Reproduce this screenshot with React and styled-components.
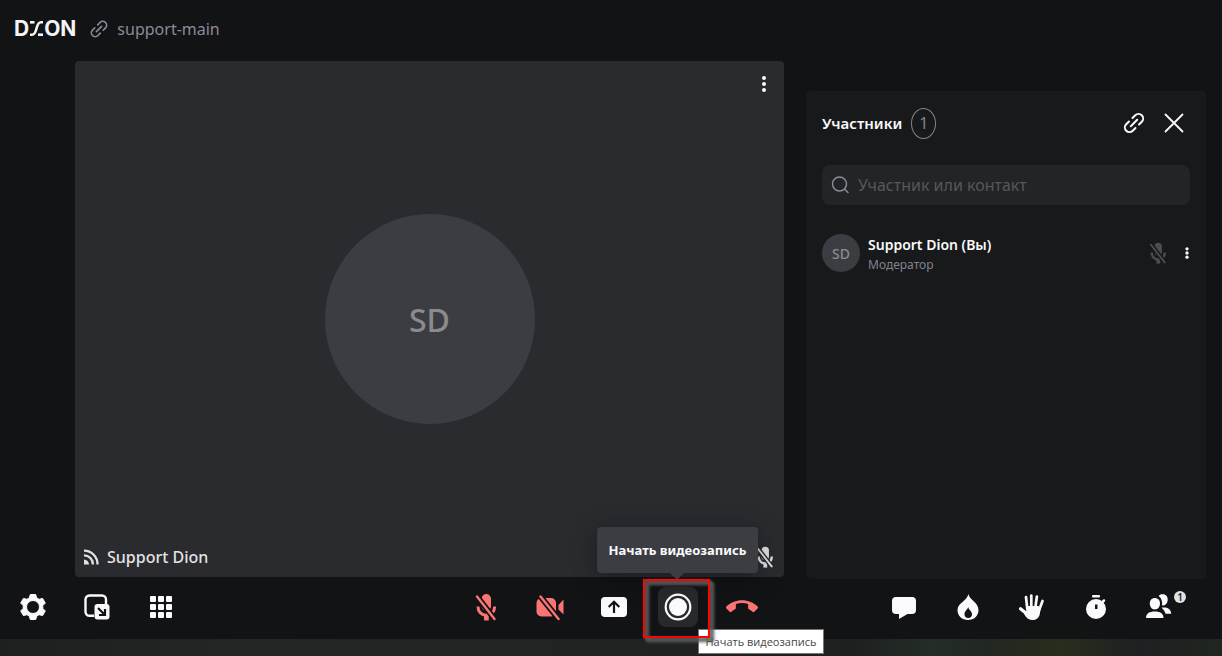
import React, { useId } from "react";
import styled, { createGlobalStyle } from "styled-components";
import { MdCallEnd } from "react-icons/md";

const GlobalStyle = createGlobalStyle`
  *, *::before, *::after { box-sizing: border-box; }
  body {
    margin: 0;
    background: #121315;
    color: #fafafc;
    font-family: "Noto Sans", "Open Sans", sans-serif;
  }
  button, input { font: inherit; color: inherit; }
`;

const Page = styled.div`
  display: flex;
  flex-direction: column;
  min-height: 100vh;
`;

const Header = styled.header`
  display: flex;
  align-items: center;
  height: 57px;
  padding: 0 14px;
`;

const Logo = styled.a`
  display: flex;
  align-items: center;
  gap: 1px;
  color: #f4f4f6;
  font: 700 21px/20px Inter, sans-serif;
  text-decoration: none;
`;

const RoomLink = styled.a`
  display: flex;
  align-items: center;
  gap: 8px;
  margin-left: 13px;
  color: #8b8b99;
  font-size: 16px;
  line-height: 24px;
  text-decoration: none;
`;

const Main = styled.main`
  display: flex;
  flex: 1;
  gap: 22px;
  padding: 4px 16px 8px 75px;
`;

const Stage = styled.section`
  display: grid;
  grid-template-rows: 46px 1fr 46px;
  flex: 1;
  margin-bottom: 2px;
  border-radius: 4px;
  background: #2a2b2f;
`;

const StageTop = styled.div`
  display: flex;
  align-items: center;
  justify-content: flex-end;
  padding: 0 8px;
`;

const StageBottom = styled.div`
  display: flex;
  align-items: center;
  justify-content: space-between;
  padding: 6px 8px 0;
  color: #e2e2e4;
`;

const Speaker = styled.span`
  display: flex;
  align-items: center;
  gap: 8px;
  font-size: 16px;
  font-weight: 500;
  line-height: 24px;
`;

const Avatar = styled.div`
  display: flex;
  align-items: center;
  justify-content: center;
  flex: none;
  place-self: center;
  width: ${(p) => p.$size}px;
  height: ${(p) => p.$size}px;
  border-radius: 50%;
  background: #3c3d42;
  color: #8a8b8f;
  font-size: ${(p) => p.$font}px;
  font-weight: 500;
`;

const Panel = styled.aside`
  flex: none;
  width: 400px;
  margin-top: 30px;
  padding: 16px;
  border-radius: 4px;
  background: #18191b;
`;

const PanelHead = styled.div`
  display: flex;
  align-items: center;
  height: 32px;
`;

const PanelTitle = styled.h2`
  margin: 0;
  font-size: 15px;
  font-weight: 600;
  line-height: 24px;
`;

const Count = styled.span`
  display: flex;
  align-items: center;
  justify-content: center;
  width: 25px;
  height: 31px;
  margin: 0 auto 0 9px;
  border: 1px solid #83838f;
  border-radius: 50%;
  color: #83838f;
  font-size: 16px;
`;

const IconButton = styled.button`
  display: flex;
  align-items: center;
  justify-content: center;
  width: ${(p) => p.$width || 32}px;
  height: 32px;
  padding: 0;
  border: 0;
  background: none;
  color: #fafafc;
`;

const PanelActions = styled.div`
  display: flex;
  gap: 8px;
`;

const Search = styled.label`
  display: flex;
  align-items: center;
  gap: 8px;
  height: 40px;
  margin-top: 26px;
  padding: 0 8px;
  border-radius: 8px;
  background: #232426;
  color: #8b8b95;
`;

const SearchInput = styled.input`
  flex: 1;
  min-width: 0;
  padding: 0;
  border: 0;
  outline: 0;
  background: none;
  font-size: 16px;
  &::placeholder { color: #56575e; opacity: 1; }
`;

const People = styled.ul`
  margin: 26px 0 0;
  padding: 0;
  list-style: none;
`;

const Person = styled.li`
  display: flex;
  align-items: center;
  gap: 8px;
`;

const PersonText = styled.div`
  flex: 1;
  padding-top: 4px;
  font-size: 14px;
  font-weight: 600;
  line-height: 20px;
`;

const Role = styled.div`
  color: #83838f;
  font-size: 12px;
  font-weight: 400;
`;

const PersonActions = styled.div`
  display: flex;
  align-items: center;
  gap: 8px;
  margin-right: -7px;
  color: #4c4c54;
`;

const Toolbar = styled.footer`
  display: grid;
  grid-template-columns: 1fr auto 1fr;
  height: 52px;
  padding: 0 8px 0 13px;
`;

const Tools = styled.div`
  display: flex;
  gap: 24px;
  justify-content: ${(p) => p.$align || "flex-start"};
  padding-right: ${(p) => (p.$align === "flex-end" ? 34 : 0)}px;
`;

const ToolItem = styled.div`
  position: relative;
  height: 40px;
`;

const ToolButton = styled.button`
  display: flex;
  align-items: center;
  justify-content: center;
  width: 40px;
  height: 40px;
  padding: 0;
  border: 0;
  border-radius: 8px;
  background: ${(p) => (p.$active ? "#28292b" : "none")};
  color: ${(p) => (p.$danger ? "#fb7474" : "#fafafc")};
`;

const Badge = styled.span`
  position: absolute;
  top: 4px;
  right: -6px;
  width: 12px;
  height: 12px;
  border-radius: 50%;
  background: #e2e2e5;
  color: #222326;
  font-size: 10px;
  font-weight: 600;
  line-height: 12px;
  text-align: center;
`;

const Tooltip = styled.div`
  position: absolute;
  bottom: 54px;
  left: 50%;
  padding: 12px;
  border-radius: 4px;
  background: #3c3d42;
  box-shadow: 0 4px 24px rgba(0, 0, 0, 0.35);
  font-size: 13px;
  font-weight: 700;
  line-height: 22px;
  white-space: nowrap;
  transform: translateX(-50%);
  &::after {
    content: "";
    position: absolute;
    top: 100%;
    left: 50%;
    margin-left: -7px;
    border: 7px solid transparent;
    border-top-color: #3c3d42;
    border-bottom-width: 0;
  }
`;

const NativeHint = styled.div`
  position: absolute;
  top: 42px;
  left: 40px;
  padding: 0 7px;
  border: 1px solid #767676;
  background: #fff;
  color: #45454a;
  font: 11px/23px "Open Sans", "Noto Sans", sans-serif;
  white-space: nowrap;
`;

const Highlight = styled.div`
  position: absolute;
  top: -8px;
  left: -15px;
  width: 67px;
  height: 59px;
  border: 2px solid #fb0404;
  filter: drop-shadow(3px 3px 1px #5c5c5c) drop-shadow(1px 1px 1px #5c5c5c);
  pointer-events: none;
`;

const Backdrop = styled.div`
  height: 17px;
  background: linear-gradient(
    90deg,
    #1e2020 0%,
    #232625 20%,
    #222424 45%,
    #1e2020 70%,
    #242d27 76%,
    #222723 81%,
    #292d1c 87%,
    #1f2022 93%,
    #20261f 100%
  );
`;

const Svg = ({ size = 24, width, height, box = 24, children }) => (
  <svg
    width={width || size}
    height={height || size}
    viewBox={`0 0 ${box} ${box}`}
    fill="currentColor"
    aria-hidden="true"
  >
    {children}
  </svg>
);

const LogoMark = () => (
  <svg width="13" height="15" viewBox="0 0 13 15" fill="none" stroke="currentColor" strokeWidth="2.6" aria-hidden="true">
    <path d="M0 1.300H4.500" />
    <path d="M13 1.300H11C5 1.300 8 13.700 2 13.700H0" />
    <path d="M8 13.700H13" />
  </svg>
);

const LinkIcon = ({ size, stroke = 2 }) => (
  <Svg size={size}>
    <g transform="rotate(-45 12 12)" fill="none" stroke="currentColor" strokeWidth={stroke} strokeLinecap="round">
      <path d="M9.500 16.600H5.600a4.600 4.600 0 0 1 0-9.200H9.500" />
      <path d="M14.500 7.400h3.900a4.600 4.600 0 0 1 0 9.200H14.500" />
      <path d="M7.500 12h9" />
    </g>
  </Svg>
);

const DotsIcon = ({ gap = 6, r = 2 }) => (
  <Svg>
    <circle cx="12" cy={12 - gap} r={r} />
    <circle cx="12" cy="12" r={r} />
    <circle cx="12" cy={12 + gap} r={r} />
  </Svg>
);

const CloseIcon = () => (
  <Svg>
    <path d="M3.500 3.500l17 17M20.500 3.500l-17 17" fill="none" stroke="currentColor" strokeWidth="1.800" strokeLinecap="round" />
  </Svg>
);

const SearchIcon = () => (
  <Svg size={20} box={20}>
    <g fill="none" stroke="currentColor" strokeWidth="1.500" strokeLinecap="round">
      <circle cx="9.500" cy="9" r="7" />
      <path d="M14.700 14.200L18 17.500" />
    </g>
  </Svg>
);

const FeedIcon = () => (
  <Svg size={16} box={16}>
    <g fill="none" stroke="currentColor" strokeWidth="2.300">
      <path d="M1 1.600A13.500 13.500 0 0 1 14.500 15.500" />
      <path d="M1 6.300A9 9 0 0 1 9.900 15.500" />
    </g>
    <path d="M1 10.400A5 5 0 0 1 6 15.500H1z" />
  </Svg>
);

const Slashed = ({ size, slash, children }) => {
  const id = useId();
  return (
    <Svg size={size} box={28}>
      <mask id={id} maskUnits="userSpaceOnUse" x="0" y="0" width="28" height="28">
        <rect width="28" height="28" fill="#fff" />
        <path d={slash} stroke="#000" strokeWidth="6" strokeLinecap="round" />
      </mask>
      <g mask={`url(#${id})`}>{children}</g>
      <path d={slash} stroke="currentColor" strokeWidth="2.400" strokeLinecap="round" />
    </Svg>
  );
};

const MicOffIcon = ({ size = 28 }) => (
  <Slashed size={size} slash="M5 3.500L22.500 26">
    <rect x="9.500" y="1" width="9.500" height="17" rx="4.750" />
    <path d="M6 13.500v.5a8.300 8.300 0 0 0 16.600 0v-.5" fill="none" stroke="currentColor" strokeWidth="3" />
    <rect x="12" y="21" width="4.800" height="6.500" />
  </Slashed>
);

const CameraOffIcon = () => (
  <Slashed size={28} slash="M4.500 3.500L22.500 26">
    <rect x="0.500" y="5" width="19.500" height="18.500" rx="5" />
    <path d="M22.500 12L27.500 6.500V21.500L22.500 16.500z" />
  </Slashed>
);

const GearIcon = () => (
  <Svg size={28} box={28}>
    <path
      fillRule="evenodd"
      d="M11.300 1.500h5.400l1 3.400 2.400 1.400 3.500-.9 2.700 4.700-2.500 2.500v2.800l2.500 2.500-2.700 4.700-3.500-.9-2.400 1.400-1 3.400h-5.400l-1-3.400-2.400-1.400-3.500.9-2.700-4.700 2.500-2.500v-2.800L1.700 10.100l2.700-4.700 3.500.9 2.400-1.400zM14 7.500a6.500 6.500 0 1 0 0 13a6.500 6.500 0 0 0 0-13z"
      stroke="currentColor"
      strokeWidth="1"
      strokeLinejoin="round"
    />
  </Svg>
);

const PipIcon = () => (
  <Svg size={28} box={28}>
    <path d="M11 22.700H6.500a4 4 0 0 1-4-4V6.500a4 4 0 0 1 4-4H19a4 4 0 0 1 4 4V11" fill="none" stroke="currentColor" strokeWidth="2.400" />
    <rect x="11.500" y="11" width="15" height="15.500" rx="3" />
    <path d="M15 15l6.500 6.500M22 16v6h-6" fill="none" stroke="#121315" strokeWidth="2.200" />
  </Svg>
);

const GridIcon = () => (
  <Svg>
    {[1, 9, 17].map((y) =>
      [1, 9, 17].map((x) => <rect key={`${x}-${y}`} x={x} y={y} width="6" height="6" rx="1" />)
    )}
  </Svg>
);

const ShareIcon = () => (
  <Svg size={28} box={28}>
    <rect x="1" y="4" width="26" height="20" rx="4" />
    <path d="M14 20V9M8.700 14L14 8.700 19.300 14" fill="none" stroke="#121315" strokeWidth="2.200" />
  </Svg>
);

const RecordIcon = () => (
  <Svg size={28} box={28}>
    <circle cx="14" cy="14" r="12.300" fill="none" stroke="currentColor" strokeWidth="2.200" />
    <circle cx="14" cy="14" r="9" />
  </Svg>
);

const ChatIcon = () => (
  <Svg size={28} box={28}>
    <path d="M6 4h16a4 4 0 0 1 4 4V17a4 4 0 0 1-4 4h-4.500L9 26V21H6a4 4 0 0 1-4-4V8a4 4 0 0 1 4-4z" />
  </Svg>
);

const FlameIcon = () => (
  <Svg size={28} box={28}>
    <path
      fillRule="evenodd"
      d="M14.500 1C15 6.500 24.500 9.500 24.500 17C24.500 23 20 27 14 27S3.500 23 3.500 17C3.500 10 12.500 8.500 14.500 1zM14.200 14C13.700 16.500 10.500 18 10.500 21.200A3.600 3.600 0 0 0 14.200 25A3.600 3.600 0 0 0 18 21.200C18 18 14.700 17 14.200 14z"
    />
  </Svg>
);

const HandIcon = () => (
  <Svg size={28} box={28}>
    <g fill="none" stroke="currentColor" strokeLinecap="round" strokeWidth="2.700">
      <path d="M9.300 16L8 4M13.300 14L13.300 2.500M17.300 15L18.900 3.500M20.800 18L24.500 8" />
      <path d="M2.500 15.700L9 21" strokeWidth="3.200" />
    </g>
    <path d="M8 13h12.500l2 3-.6 4.500C21.300 24.500 18.500 27 15 27c-4 0-6.500-1.600-8.500-5.200L5.500 17.500l3 .5z" />
  </Svg>
);

const TimerIcon = () => (
  <Svg size={28} box={28}>
    <rect x="10" y="2" width="8" height="2.500" rx="1" />
    <path d="M20.500 9l1.500-1.500" stroke="currentColor" strokeWidth="2.500" strokeLinecap="round" />
    <path fillRule="evenodd" d="M14 6a10 10 0 1 0 0 20a10 10 0 0 0 0-20zM13 11.500h2.500v4.500h-2.500z" />
  </Svg>
);

const PeopleIcon = () => (
  <Svg size={28} box={28}>
    <path d="M8.800 5C12 5 14 7.300 14 10.500S12 16.500 8.800 16.500 3.800 13.700 3.800 10.500 5.600 5 8.800 5z" />
    <path d="M0 25C0 20.500 3.500 18.500 8.800 18.500S17.500 20.500 17.500 25z" />
    <path d="M12.600 3C13.500 1.600 15.100 1.200 16.900 1.200c3.200 0 4.800 2.300 4.800 5.300 0 3.200-1.700 5.800-4.500 6-.4 0-.8-.1-1.200-.2C16.600 8.800 15.500 5 12.600 3z" />
    <path d="M15.500 14.800c5-.8 9.500.9 9.700 6H19.500c-.6-2.600-2-4.300-4-6z" />
  </Svg>
);

const leftTools = [
  { label: "Настройки", icon: <GearIcon /> },
  { label: "Картинка в картинке", icon: <PipIcon /> },
  { label: "Сетка", icon: <GridIcon /> },
];

const rightTools = [
  { label: "Чат", icon: <ChatIcon /> },
  { label: "Реакции", icon: <FlameIcon /> },
  { label: "Поднять руку", icon: <HandIcon /> },
  { label: "Таймер", icon: <TimerIcon /> },
  { label: "Участники", icon: <PeopleIcon />, badge: 1 },
];

const Tool = ({ label, icon, badge, danger, active, children }) => (
  <ToolItem>
    <ToolButton type="button" aria-label={label} $danger={danger} $active={active}>
      {icon}
    </ToolButton>
    {badge && <Badge>{badge}</Badge>}
    {children}
  </ToolItem>
);

export default function App() {
  return (
    <Page>
      <GlobalStyle />
      <Header>
        <Logo href="#" aria-label="DION">
          D<LogoMark />ON
        </Logo>
        <RoomLink href="#support-main">
          <LinkIcon size={20} />
          support-main
        </RoomLink>
      </Header>

      <Main>
        <Stage>
          <StageTop>
            <IconButton type="button" aria-label="Меню видео" $width={24}>
              <DotsIcon />
            </IconButton>
          </StageTop>
          <Avatar $size={210} $font={32}>SD</Avatar>
          <StageBottom>
            <Speaker>
              <FeedIcon />
              Support Dion
            </Speaker>
            <MicOffIcon size={22} />
          </StageBottom>
        </Stage>

        <Panel>
          <PanelHead>
            <PanelTitle>Участники</PanelTitle>
            <Count>1</Count>
            <PanelActions>
              <IconButton type="button" aria-label="Скопировать ссылку">
                <LinkIcon size={24} />
              </IconButton>
              <IconButton type="button" aria-label="Закрыть">
                <CloseIcon />
              </IconButton>
            </PanelActions>
          </PanelHead>
          <Search>
            <SearchIcon />
            <SearchInput type="text" aria-label="Участник или контакт" placeholder="Участник или контакт" />
          </Search>
          <People>
            <Person>
              <Avatar $size={38} $font={14}>SD</Avatar>
              <PersonText>
                Support Dion (Вы)
                <Role>Модератор</Role>
              </PersonText>
              <PersonActions>
                <MicOffIcon size={22} />
                <IconButton type="button" aria-label="Меню участника" $width={20}>
                  <DotsIcon gap={5} r={2} />
                </IconButton>
              </PersonActions>
            </Person>
          </People>
        </Panel>
      </Main>

      <Toolbar>
        <Tools>
          {leftTools.map((tool) => <Tool key={tool.label} {...tool} />)}
        </Tools>
        <Tools>
          <Tool label="Включить микрофон" danger icon={<MicOffIcon />} />
          <Tool label="Включить камеру" danger icon={<CameraOffIcon />} />
          <Tool label="Показать экран" icon={<ShareIcon />} />
          <Tool label="Начать видеозапись" active icon={<RecordIcon />}>
            <Tooltip role="tooltip">Начать видеозапись</Tooltip>
            <NativeHint>Начать видеозапись</NativeHint>
            <Highlight />
          </Tool>
          <Tool label="Завершить звонок" danger icon={<MdCallEnd size={32} />} />
        </Tools>
        <Tools $align="flex-end">
          {rightTools.map((tool) => <Tool key={tool.label} {...tool} />)}
        </Tools>
      </Toolbar>
      <Backdrop />
    </Page>
  );
}
